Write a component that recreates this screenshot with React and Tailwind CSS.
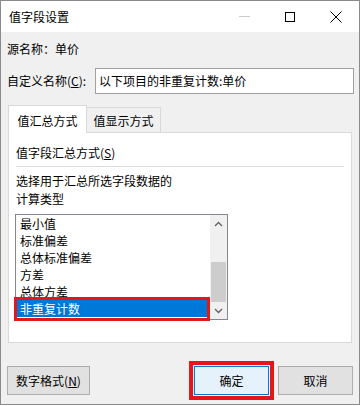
import React from 'react';

const items = ['最小值', '标准偏差', '总体标准偏差', '方差', '总体方差', '非重复计数'];

function Chevron({ up }) {
  return (
    <svg width="9" height="6" viewBox="0 0 9 6" fill="none">
      <path d={up ? 'M1 5L4.5 1.5L8 5' : 'M1 1L4.5 4.5L8 1'} stroke="#606060" strokeWidth="1.3" />
    </svg>
  );
}

export default function App() {
  return (
    <div className="w-[360px] h-[405px] border border-[#8a8a8a] bg-[#f0f0f0] flex flex-col text-[12px] text-black font-['Microsoft_YaHei','Noto_Sans_CJK_SC',sans-serif]">
      {/* title bar */}
      <div className="h-[31px] bg-white flex items-center shrink-0">
        <span className="pl-[8px] leading-[18px]">值字段设置</span>
        <div className="ml-auto flex h-full">
          <div className="w-[46px] flex items-center justify-center">
            <div className="w-[11px] h-px bg-[#cccccc]" />
          </div>
          <div className="w-[46px] flex items-center justify-center">
            <div className="w-[10px] h-[10px] border border-black" />
          </div>
          <div className="w-[46px] flex items-center justify-center">
            <svg width="12" height="12" viewBox="0 0 12 12">
              <path d="M0.5 0.5L11.5 11.5M11.5 0.5L0.5 11.5" stroke="#000" strokeWidth="1" />
            </svg>
          </div>
        </div>
      </div>

      <div className="flex-1 flex flex-col pl-[6px]">
        <div className="mt-[8px] leading-[18px]">源名称：单价</div>

        <div className="mt-[10px] flex items-center h-[26px]">
          <span className="w-[88px] leading-[18px]">
            自定义名称(<u>C</u>):
          </span>
          <div className="w-[259px] h-[26px] border border-[#a0a0a0] bg-white pl-[3px] flex items-center leading-[18px]">
            以下项目的非重复计数:单价
          </div>
        </div>

        {/* tabs */}
        <div className="mt-[11px] ml-[1px] flex items-end -mb-px relative z-10">
          <div className="w-[79px] h-[28px] bg-white border border-b-0 border-[#d9d9d9] flex justify-center pt-[6px] leading-[18px]">
            值汇总方式
          </div>
          <div className="w-[74px] h-[26px] bg-[#f0f0f0] border border-l-0 border-[#d9d9d9] flex justify-center pt-[4px] leading-[18px]">
            值显示方式
          </div>
        </div>

        <div className="w-[344px] h-[211px] ml-[1px] bg-white border border-[#d9d9d9] px-[7px] flex flex-col">
          <div className="mt-[11px] leading-[18px]">
            值字段汇总方式(<u>S</u>)
          </div>
          <div className="mt-[4px] h-px w-[328px] bg-[#dcdcdc]" />
          <div className="mt-[5px] leading-[17.5px]">选择用于汇总所选字段数据的</div>
          <div className="leading-[17.5px]">计算类型</div>

          <div className="mt-[7px] -ml-[1px] w-[213px] h-[106px] border border-[#828790] bg-white flex">
            <div className="w-[194px] flex flex-col">
              {items.map((t, i) =>
                i === items.length - 1 ? (
                  <div key={t} className="relative h-[17px] pl-[4px] leading-[17px] bg-[#0078d7] text-white">
                    {t}
                    <div className="absolute -left-[2px] right-0 -top-[3px] -bottom-[4px] border-[3px] border-[#e8141c]" />
                  </div>
                ) : (
                  <div key={t} className="h-[17px] pl-[4px] leading-[17px]">
                    {t}
                  </div>
                )
              )}
            </div>
            <div className="w-[17px] bg-[#f0f0f0] flex flex-col">
              <div className="h-[17px] flex items-center justify-center">
                <Chevron up />
              </div>
              <div className="flex-1 flex flex-col justify-end">
                <div className="h-[40px] mx-[1px] bg-[#cdcdcd]" />
              </div>
              <div className="h-[17px] flex items-center justify-center">
                <Chevron />
              </div>
            </div>
          </div>
        </div>

        {/* buttons */}
        <div className="mt-[23px] flex">
          <div className="w-[83px] h-[29px] bg-[#e1e1e1] border border-[#adadad] flex items-center justify-center leading-[18px]">
            数字格式(<u>N</u>)
          </div>
          <div className="relative ml-[104px] w-[75px] h-[29px] bg-[#e5f1fb] border border-[#0078d7] flex items-center justify-center leading-[18px]">
            确定
            <div className="absolute -inset-[6px] border-4 border-[#e8141c]" />
          </div>
          <div className="ml-[9px] w-[75px] h-[29px] bg-[#e1e1e1] border border-[#adadad] flex items-center justify-center leading-[18px]">
            取消
          </div>
        </div>
      </div>
    </div>
  );
}
